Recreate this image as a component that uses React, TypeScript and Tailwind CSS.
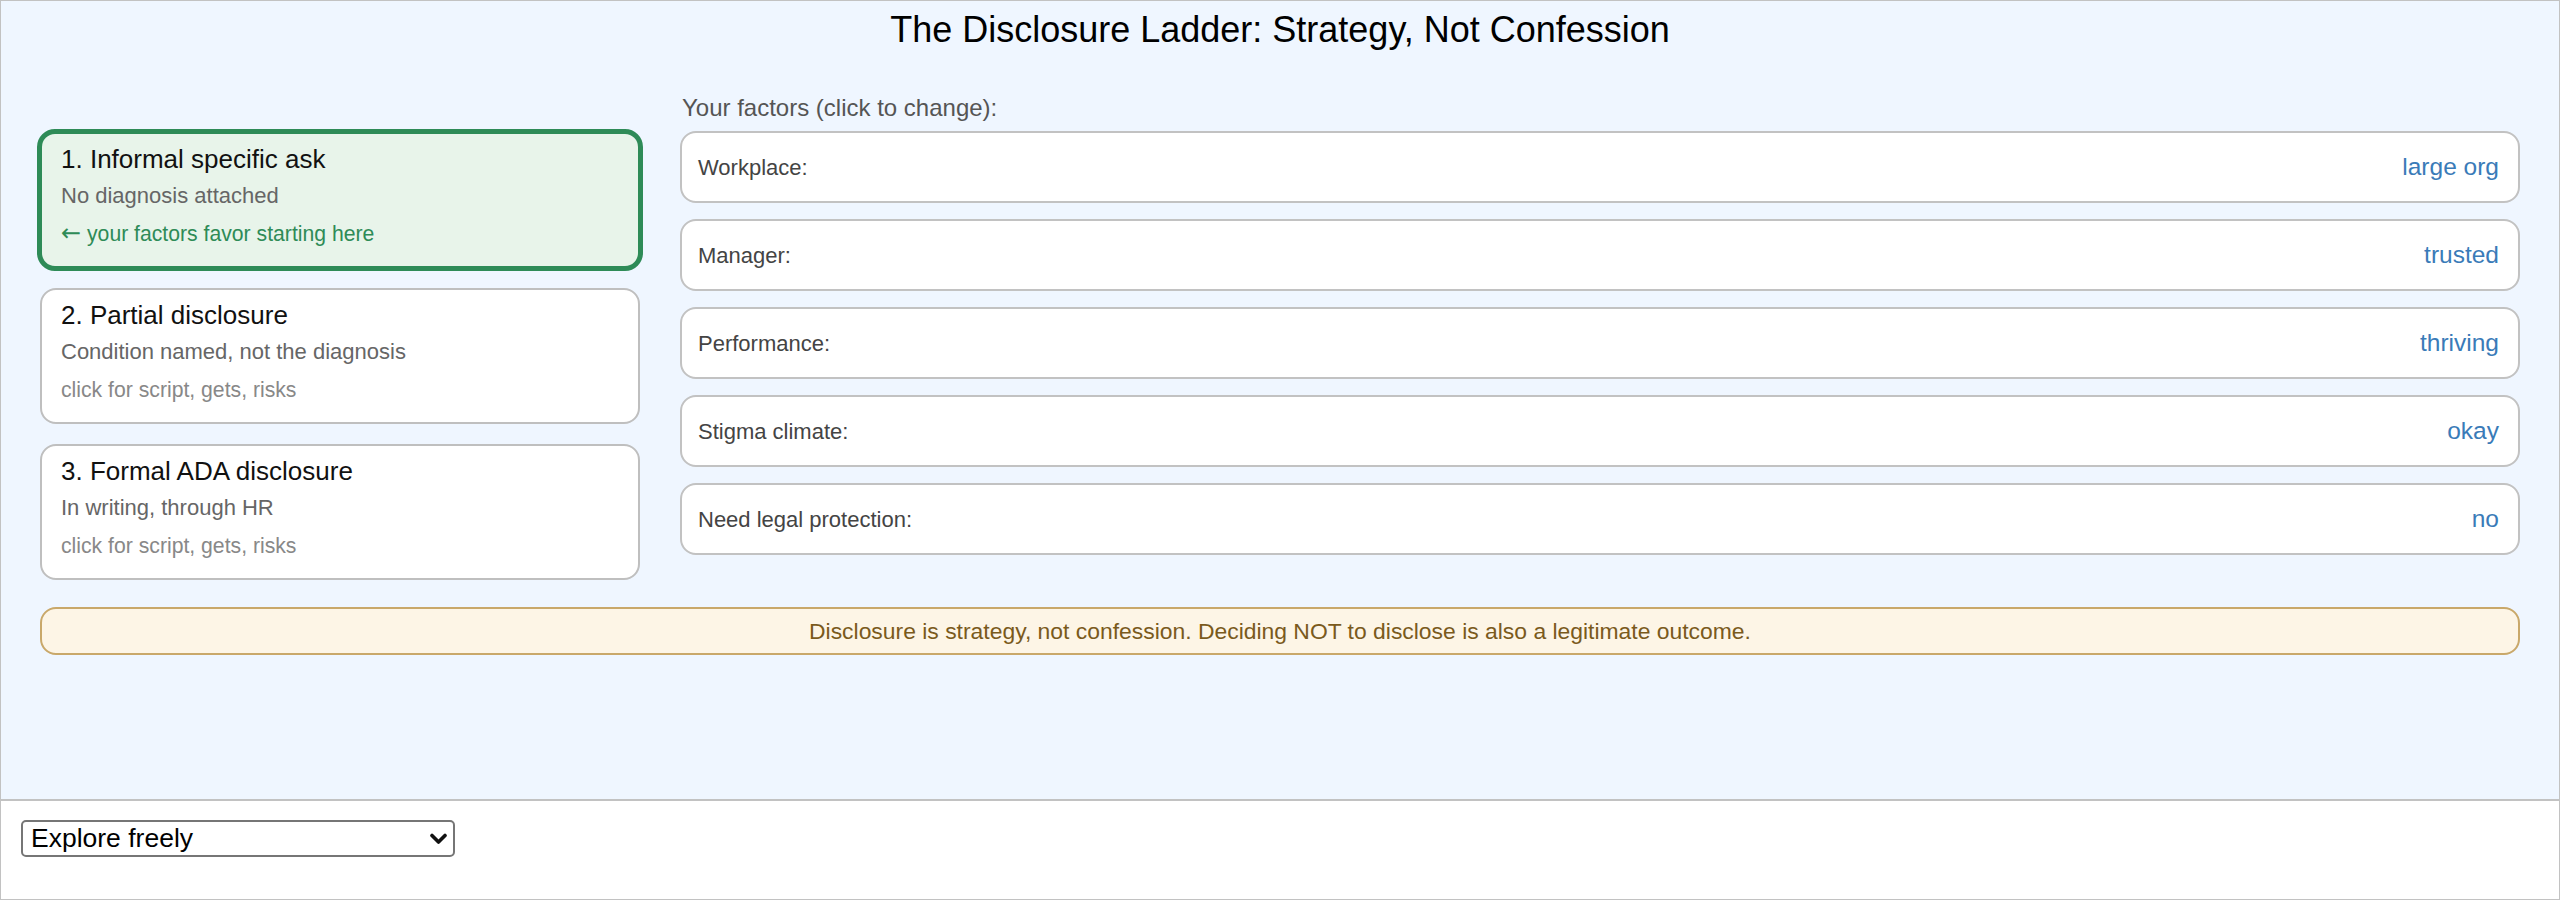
import React from "react";

const font = { fontFamily: '"Liberation Sans", Arial, Helvetica, sans-serif' };

type Step = { title: string; sub: string; hint: string; active?: boolean };

const steps: Step[] = [
  { title: "1. Informal specific ask", sub: "No diagnosis attached", hint: "your factors favor starting here", active: true },
  { title: "2. Partial disclosure", sub: "Condition named, not the diagnosis", hint: "click for script, gets, risks" },
  { title: "3. Formal ADA disclosure", sub: "In writing, through HR", hint: "click for script, gets, risks" },
];

const factors = [
  { label: "Workplace:", value: "large org" },
  { label: "Manager:", value: "trusted" },
  { label: "Performance:", value: "thriving" },
  { label: "Stigma climate:", value: "okay" },
  { label: "Need legal protection:", value: "no" },
];

function StepCard({ s, className }: { s: Step; className?: string }) {
  const base = s.active
    ? "border-[5px] border-[#2e8b57] bg-[#e8f4ea] rounded-[18px] -mx-[3px]"
    : "border-2 border-[#bfbfbf] bg-white rounded-[16px]";
  return (
    <div className={`${base} pt-[10px] pb-[20px] pl-[19px] pr-[19px] cursor-pointer ${className ?? ""}`}>
      <div className="text-[26px] leading-[31px] text-[#111]">{s.title}</div>
      <div className="mt-[8px] text-[22px] leading-[26px] text-[#666]">{s.sub}</div>
      <div className={`mt-[12px] text-[21.2px] leading-[25px] ${s.active ? "text-[#2e8b57]" : "text-[#888]"}`}>
        {s.active ? (
          <>
            <span className="font-['DejaVu_Sans'] text-[24px] leading-[20px]">←</span> {s.hint}
          </>
        ) : (
          s.hint
        )}
      </div>
    </div>
  );
}

export default function App() {
  return (
    <div style={font} className="w-[2560px] h-[900px] border border-[#c2c2c2] flex flex-col bg-white">
      <div className="flex-1 bg-[#eff6ff] flex flex-col">
        <h1 className="mt-[9px] text-center text-[36px] leading-[40px] font-normal text-black">
          The Disclosure Ladder: Strategy, Not Confession
        </h1>
        <div className="mt-[44px] px-[39px] flex gap-[40px] items-start">
          <div className="w-[600px] shrink-0 pt-[35px] flex flex-col">
            <StepCard s={steps[0]} />
            <StepCard s={steps[1]} className="mt-[17px]" />
            <StepCard s={steps[2]} className="mt-[20px]" />
          </div>
          <div className="flex-1 flex flex-col">
            <div className="pl-[2px] text-[24px] leading-[28px] text-[#555]">Your factors (click to change):</div>
            <div className="mt-[9px] flex flex-col gap-[16px]">
              {factors.map((f) => (
                <div
                  key={f.label}
                  className="h-[72px] border-2 border-[#c2c2c2] bg-white rounded-[16px] pl-[16px] pr-[19px] flex items-center justify-between cursor-pointer"
                >
                  <span className="text-[22px] text-[#444]">{f.label}</span>
                  <span className="text-[24.5px] text-[#3a7bb8]">{f.value}</span>
                </div>
              ))}
            </div>
          </div>
        </div>
        <div className="mx-[39px] mt-[27px] border-2 border-[#c9a86a] bg-[#fdf5e6] rounded-[16px] py-[9px] text-center text-[22.9px] leading-[26px] text-[#7a5a1c]">
          Disclosure is strategy, not confession. Deciding NOT to disclose is also a legitimate outcome.
        </div>
      </div>
      <div className="border-t-2 border-[#c2c2c2] h-[100px] bg-white pt-[19px] pl-[20px]">
        <div className="relative w-[434px] h-[37px]">
          <select
            defaultValue="free"
            className="appearance-none w-[434px] h-[37px] border-2 border-[#767676] rounded-[5px] bg-white pl-[8px] text-[26.5px] leading-[31px] text-black"
            style={font}
          >
            <option value="free">Explore freely</option>
            <option value="guided">Guided walkthrough</option>
          </select>
          <svg
            className="absolute right-[8px] top-[13px] pointer-events-none"
            width="17"
            height="12"
            viewBox="0 0 17 12"
          >
            <path d="M2 2.5 L8.5 9 L15 2.5" fill="none" stroke="#111" strokeWidth="3.6" strokeLinecap="round" strokeLinejoin="round" />
          </svg>
        </div>
      </div>
    </div>
  );
}
